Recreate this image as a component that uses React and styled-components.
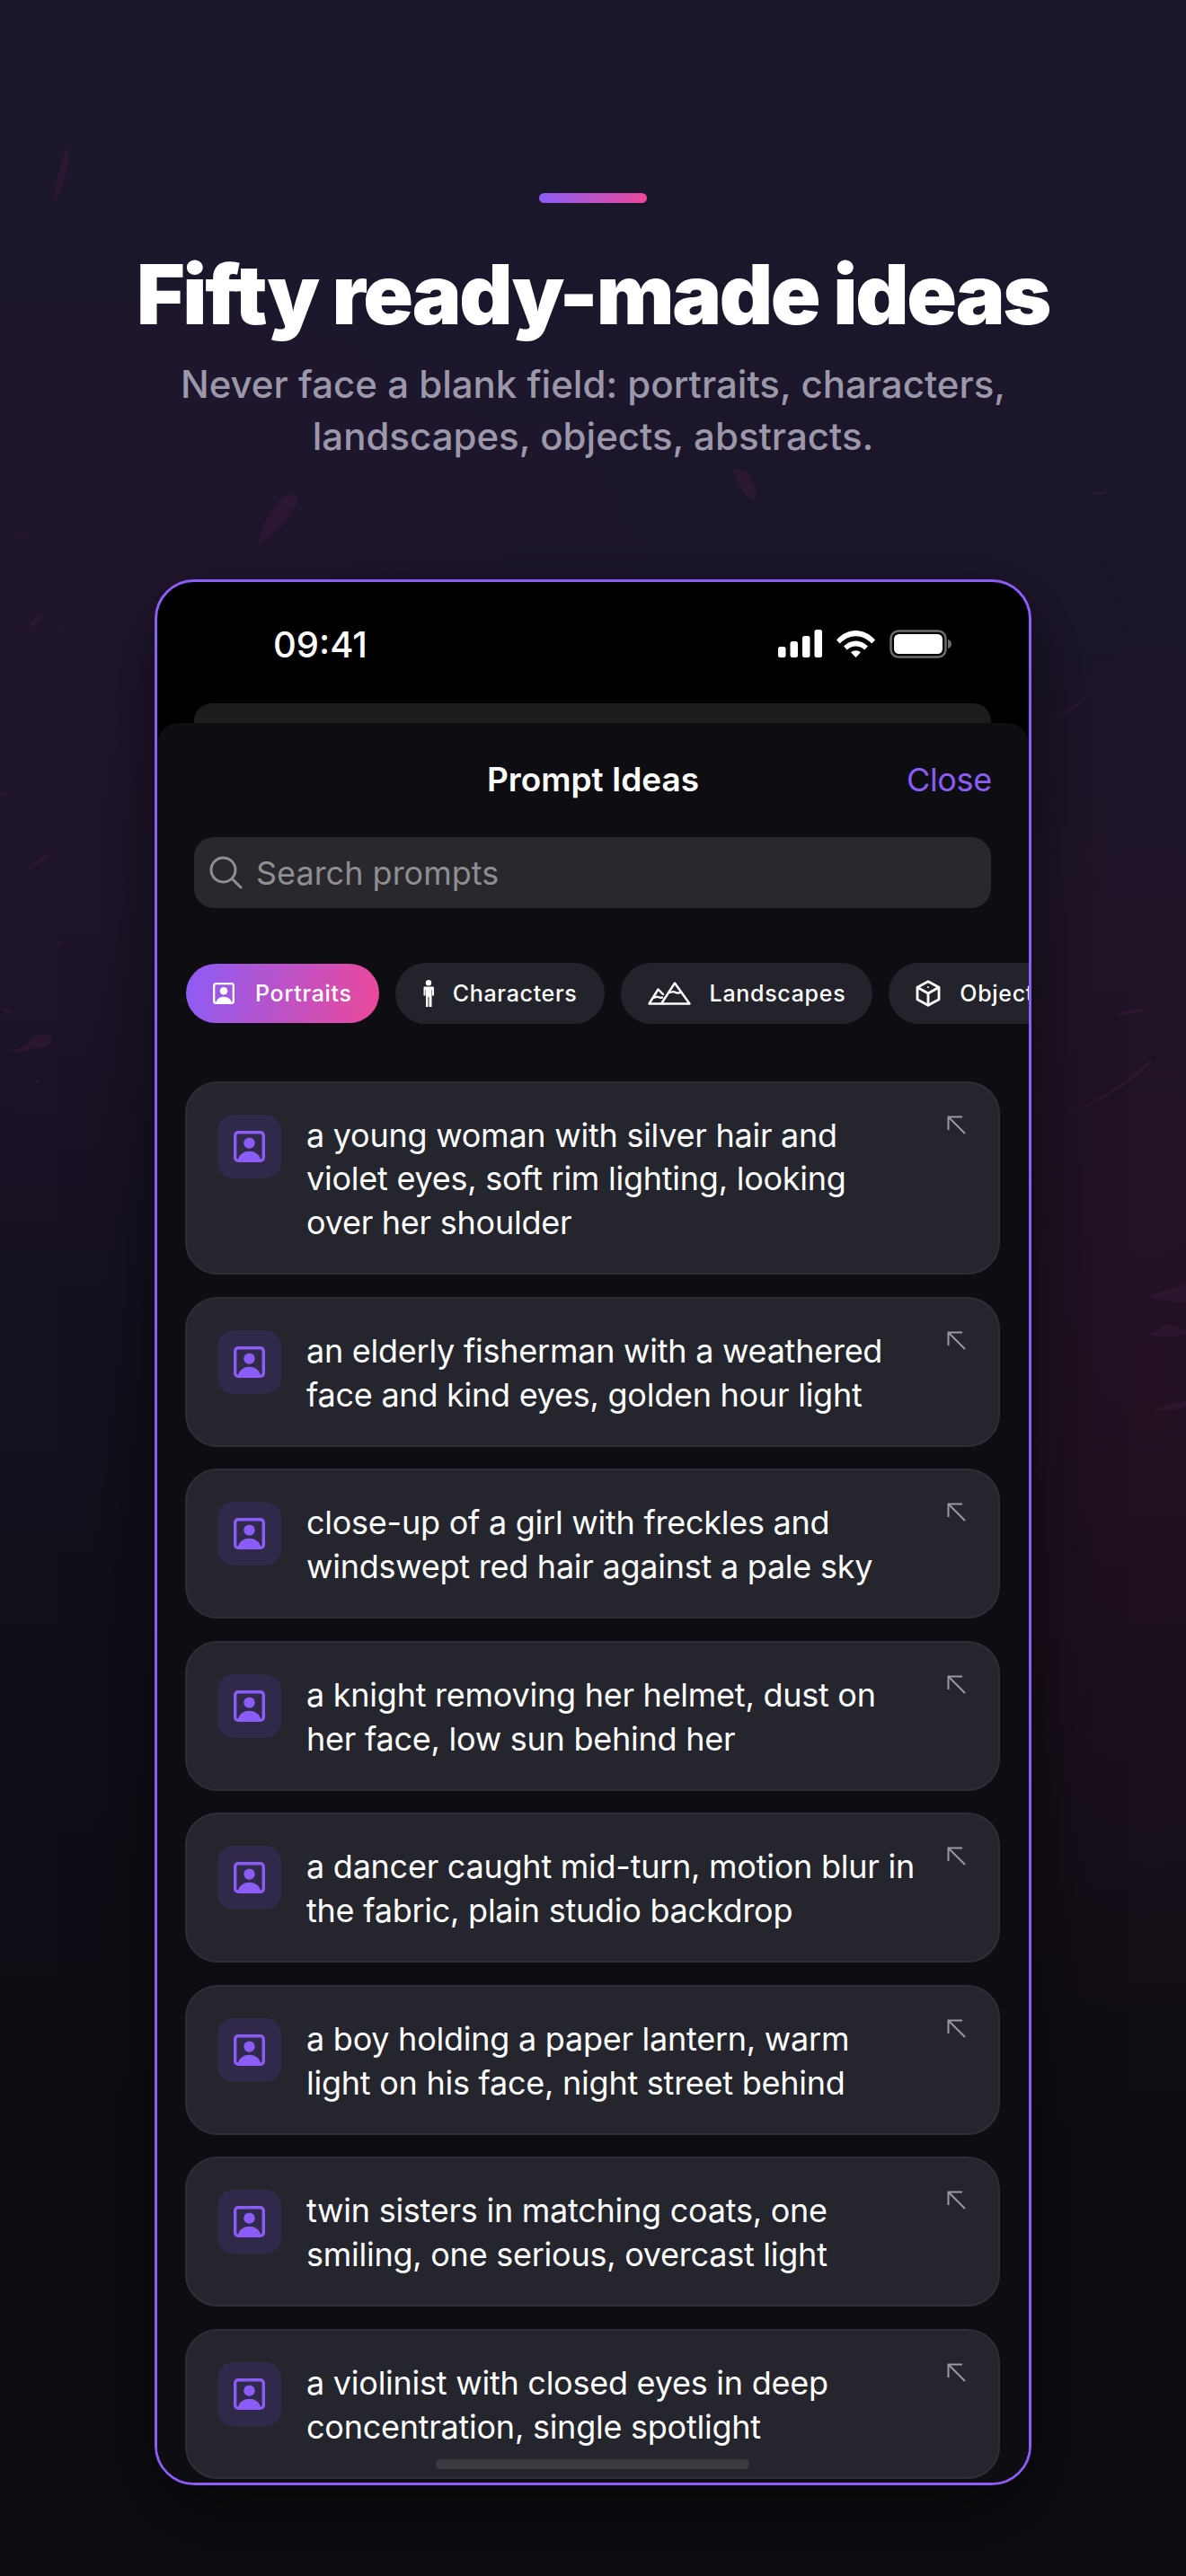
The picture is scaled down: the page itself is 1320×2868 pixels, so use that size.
import React from 'react'
import styled, { createGlobalStyle } from 'styled-components'

const GlobalStyle = createGlobalStyle`
    html, body {
        margin: 0;
        padding: 0;
        background: #0d0d12;
    }
    * {
        box-sizing: border-box;
    }
`

const PROMPTS = [
    'a young woman with silver hair and violet eyes, soft rim lighting, looking over her shoulder',
    'an elderly fisherman with a weathered face and kind eyes, golden hour light',
    'close-up of a girl with freckles and windswept red hair against a pale sky',
    'a knight removing her helmet, dust on her face, low sun behind her',
    'a dancer caught mid-turn, motion blur in the fabric, plain studio backdrop',
    'a boy holding a paper lantern, warm light on his face, night street behind',
    'twin sisters in matching coats, one smiling, one serious, overcast light',
    'a violinist with closed eyes in deep concentration, single spotlight',
]

// faint paint flecks in the backdrop
const FLECKS = [
    'M60 226q4-40 16-66q2 36-16 66z',
    'M286 608q8-40 38-60q10 4 6 12q-14 30-44 48z',
    'M816 523q14-4 20 10q8 14 4 24q-14-2-24-34z',
    'M18 598q6-3 10 0q-6 3-10 0z',
    'M30 700q6-12 16-16q2 8-16 16z',
    'M0 885q6-5 12-5q-4 5-12 5z',
    'M28 970q14-12 30-24q-8 14-30 24z',
    'M62 1050q4-4 8 0q-4 3-8 0z',
    'M0 1122q8-2 14 6q-8 0-14-6z',
    'M8 1170q20-2 30-16q22-6 20 6q-10 10-20 6q-14 8-30 4z',
    'M36 1205q6-4 10 0q-6 2-10 0z',
    'M1213 549q10-4 20 0q-10 4-20 0z',
    'M1168 803q24-14 47-33q-10 18-47 33z',
    'M1181 1242q50-18 97-60q10-4-4 8q-40 36-93 52z',
    'M1240 1130q20-8 38-7q-16 8-38 7z',
    'M1276 1486q14-4 22-12q12 2 22 8v4q-20 4-44 0z',
    'M1276 1443q24-6 44-14v22q-24-2-44-8z',
    'M1285 1570q14-8 35-10v6q-18 6-35 4z',
]

const PortraitIcon = ({ size = 24 }) => (
    <svg width={size} height={size} viewBox="0 0 36 36" fill="none">
        <rect x="1.750" y="1.750" width="32.500" height="32.500" rx="3.500" stroke="currentColor" strokeWidth="3.500" />
        <circle cx="18" cy="14" r="6.400" fill="currentColor" />
        <path d="M5 33c1.500-6 6.500-9.500 13-9.500S29.500 27 31 33z" fill="currentColor" />
    </svg>
)

const PersonIcon = () => (
    <svg width="14" height="30" viewBox="0 0 14 30" fill="currentColor">
        <circle cx="7" cy="3.200" r="3.200" />
        <path d="M2.500 7.500h9c.9 0 1.500.6 1.500 1.500v8.500h-2V11h-.5v19H7.500V19h-1v11H4V11h-.5v6.500h-2V9c0-.9.100-1.500 1-1.500z" />
    </svg>
)

const MountainIcon = () => (
    <svg width="48" height="26" viewBox="0 0 48 26" fill="none" stroke="currentColor" strokeWidth="2.400" strokeLinejoin="round" strokeLinecap="round">
        <path d="M15 24.500H1.500L11.500 8.500 17 14" />
        <path d="M15 24.500 30 1.500 46.500 24.500z" />
        <path d="M6 17.500c2 .8 3.500-1.500 5.500-.5s3 1.500 4.500.5" />
        <path d="M23.500 11.500c2.500 1.500 4-1.500 6.500 0s4.500 1.500 7 0" />
    </svg>
)

const BoxIcon = () => (
    <svg width="28" height="30" viewBox="0 0 28 30" fill="none" stroke="currentColor" strokeWidth="2.800" strokeLinejoin="round" strokeLinecap="round">
        <path d="M14 1.800 26 8.200v13.600L14 28.200 2 21.800V8.200z" />
        <path d="M2.500 8.500 14 15l11.500-6.500M14 15v13" />
        <circle cx="14" cy="8" r="1" fill="currentColor" stroke="none" />
    </svg>
)

const SearchIcon = () => (
    <svg width="37" height="37" viewBox="0 0 37 37" fill="none" stroke="#8e8e93" strokeWidth="3" strokeLinecap="round">
        <circle cx="15.500" cy="15.500" r="13.500" />
        <path d="M25.500 25.500 35 35" />
    </svg>
)

const ArrowIcon = () => (
    <svg width="21" height="21" viewBox="0 0 21 21" fill="none" stroke="#9a9aa6" strokeWidth="2">
        <path d="M1.500 16V1.500H17" />
        <path d="M1.500 1.500 20 20" />
    </svg>
)

const SignalIcon = () => (
    <svg width="49" height="31" viewBox="0 0 49 31" fill="#fff">
        <rect x="0" y="19" width="8.500" height="12" rx="2.500" />
        <rect x="13.500" y="13" width="8.500" height="18" rx="2.500" />
        <rect x="27" y="7" width="8.500" height="24" rx="2.500" />
        <rect x="40.500" y="0" width="8.500" height="31" rx="2.500" />
    </svg>
)

const WifiIcon = () => (
    <svg width="43" height="31" viewBox="0 0 43 31" fill="#fff">
        <path d="M0 11.500C12-2.500 31-2.500 43 11.500l-3.800 4C28.500 4.500 14.500 4.500 3.800 15.500z" />
        <path d="M8 18.500c8-8 19-8 27 0l-3.800 4c-5.500-5.500-13.900-5.500-19.400 0z" />
        <path d="M16 25.300c3-2.700 8-2.700 11 0L21.500 31z" />
    </svg>
)

const BatteryIcon = () => (
    <svg width="69" height="32" viewBox="0 0 69 32">
        <rect x="1.500" y="1.500" width="61" height="29" rx="8.500" fill="none" stroke="#6c6c6c" strokeWidth="2.500" />
        <rect x="5" y="5" width="54" height="22" rx="5.500" fill="#fff" />
        <path d="M65 11c2.500.5 4 2.500 4 5s-1.500 4.500-4 5z" fill="#6c6c6c" />
    </svg>
)

const Page = styled.div`
    position: relative;
    width: 1320px;
    height: 2868px;
    overflow: hidden;
    padding-top: 215px;
    display: flex;
    flex-direction: column;
    align-items: center;
    font-family: Inter, "Noto Sans", sans-serif;
    background:
        radial-gradient(ellipse 420px 850px at 1280px 1560px, rgba(70, 20, 44, 0.3), transparent 100%),
        radial-gradient(ellipse 700px 700px at 100px 760px, rgba(56, 24, 66, 0.16), transparent 100%),
        linear-gradient(180deg, #1a172b 0%, #1c162b 20%, #1b1426 36%, #151020 50%, #110e18 66%, #0e0d13 82%, #0e0d12 100%);
`

const Flecks = styled.svg`
    position: absolute;
    top: 0;
    left: 0;
    pointer-events: none;
`

const AccentBar = styled.div`
    position: relative;
    width: 120px;
    height: 11px;
    border-radius: 6px;
    background: linear-gradient(90deg, #8b5cf6, #ec4899);
`

const Title = styled.h1`
    position: relative;
    margin: 46px 0 0;
    font-size: 92px;
    line-height: 112px;
    font-weight: 900;
    letter-spacing: -2.300px;
    color: #fff;
    white-space: nowrap;
`

const Subtitle = styled.p`
    position: relative;
    margin: 15px 0 0;
    width: 1000px;
    text-align: center;
    font-size: 42px;
    line-height: 58px;
    font-weight: 500;
    color: #9b98a9;
`

const Phone = styled.div`
    margin-top: 130px;
    width: 976px;
    height: 2122px;
    flex: none;
    position: relative;
    overflow: hidden;
    background: #000;
    border: 3px solid #8b5cf6;
    border-radius: 44px;
    box-shadow: 0 30px 90px rgba(0, 0, 0, 0.55);
`

const StatusBar = styled.div`
    height: 135px;
    padding: 47px 86px 0 129px;
    display: flex;
    justify-content: space-between;
    align-items: flex-start;
    color: #fff;
`

const Clock = styled.span`
    font-size: 40px;
    line-height: 46px;
    font-weight: 500;
`

const StatusIcons = styled.div`
    display: flex;
    gap: 16px;
    padding-top: 6px;
`

const BackCard = styled.div`
    height: 22px;
    margin: 0 42px 0 41px;
    border-radius: 20px 20px 0 0;
    background: #1c1c1f;
`

const Sheet = styled.div`
    height: 1962px;
    border-radius: 24px 24px 0 0;
    background: #0e0e12;
    padding-top: 40px;
`

const SheetHeader = styled.div`
    display: grid;
    grid-template-columns: 1fr auto 1fr;
    align-items: center;
    padding: 0 41px;
    height: 44px;
`

const SheetTitle = styled.h2`
    grid-column: 2;
    margin: 0;
    font-size: 37px;
    font-weight: 600;
    color: #fff;
`

const CloseButton = styled.span`
    justify-self: end;
    font-size: 36px;
    letter-spacing: -0.300px;
    color: #8b5cf6;
`

const SearchBar = styled.div`
    margin: 43px 42px 0 41px;
    height: 79px;
    padding: 0 17px;
    display: flex;
    align-items: center;
    gap: 15px;
    border-radius: 22px;
    background: #28282d;
    font-size: 36px;
    color: #8e8e93;
`

const ChipRow = styled.div`
    margin-top: 61px;
    padding-left: 32px;
    height: 68px;
    display: flex;
    align-items: center;
    gap: 18px;
`

const Chip = styled.div`
    flex: none;
    height: ${props => props.active ? '66px' : '68px'};
    padding: 0 30px;
    display: flex;
    align-items: center;
    gap: ${props => props.gap}px;
    border-radius: 34px;
    font-size: 25px;
    font-weight: 500;
    letter-spacing: 0.700px;
    color: #fff;
    background: ${props => props.active ? 'linear-gradient(100deg, #8b5cf6, #ec4899)' : '#23232c'};
`

const CardList = styled.div`
    margin-top: 63.500px;
    padding: 0 32px 0 31px;
    display: flex;
    flex-direction: column;
    gap: 24.500px;
`

const Card = styled.div`
    flex: none;
    padding: 35px 36px 31.500px 34px;
    display: flex;
    align-items: flex-start;
    border-radius: 36px;
    border: 2px solid #2e2e38;
    background: #25252e;
`

const CardIcon = styled.div`
    flex: none;
    width: 71px;
    height: 71px;
    margin-right: 28px;
    display: flex;
    align-items: center;
    justify-content: center;
    border-radius: 18px;
    background: #30294a;
    color: #8b5cf6;
`

const CardText = styled.p`
    flex: none;
    width: 683px;
    margin: -1px 0 0;
    font-size: 36px;
    line-height: 48.750px;
    letter-spacing: -0.250px;
    color: #fff;
`

const CardArrow = styled.div`
    flex: none;
    margin: 1px 0 0 auto;
    line-height: 0;
`

const HomeIndicator = styled.div`
    position: absolute;
    left: 310px;
    bottom: 15px;
    width: 349px;
    height: 11px;
    border-radius: 6px;
    background: #3a3a40;
`

export default function App() {
    return (
        <Page>
            <GlobalStyle />
            <Flecks width="1320" height="2868" viewBox="0 0 1320 2868" fill="#3a1a3c" fillOpacity="0.5">
                {FLECKS.map(d => <path key={d} d={d} />)}
            </Flecks>
            <AccentBar />
            <Title>Fifty ready-made ideas</Title>
            <Subtitle>Never face a blank field: portraits, characters, landscapes, objects, abstracts.</Subtitle>
            <Phone>
                <StatusBar>
                    <Clock>09:41</Clock>
                    <StatusIcons>
                        <SignalIcon />
                        <WifiIcon />
                        <BatteryIcon />
                    </StatusIcons>
                </StatusBar>
                <BackCard />
                <Sheet>
                    <SheetHeader>
                        <SheetTitle>Prompt Ideas</SheetTitle>
                        <CloseButton>Close</CloseButton>
                    </SheetHeader>
                    <SearchBar>
                        <SearchIcon />
                        Search prompts
                    </SearchBar>
                    <ChipRow>
                        <Chip active gap={23}><PortraitIcon />Portraits</Chip>
                        <Chip gap={20}><PersonIcon />Characters</Chip>
                        <Chip gap={21}><MountainIcon />Landscapes</Chip>
                        <Chip gap={21}><BoxIcon />Objects</Chip>
                    </ChipRow>
                    <CardList>
                        {PROMPTS.map(text => (
                            <Card key={text}>
                                <CardIcon><PortraitIcon size={35} /></CardIcon>
                                <CardText>{text}</CardText>
                                <CardArrow><ArrowIcon /></CardArrow>
                            </Card>
                        ))}
                    </CardList>
                </Sheet>
                <HomeIndicator />
            </Phone>
        </Page>
    )
}
